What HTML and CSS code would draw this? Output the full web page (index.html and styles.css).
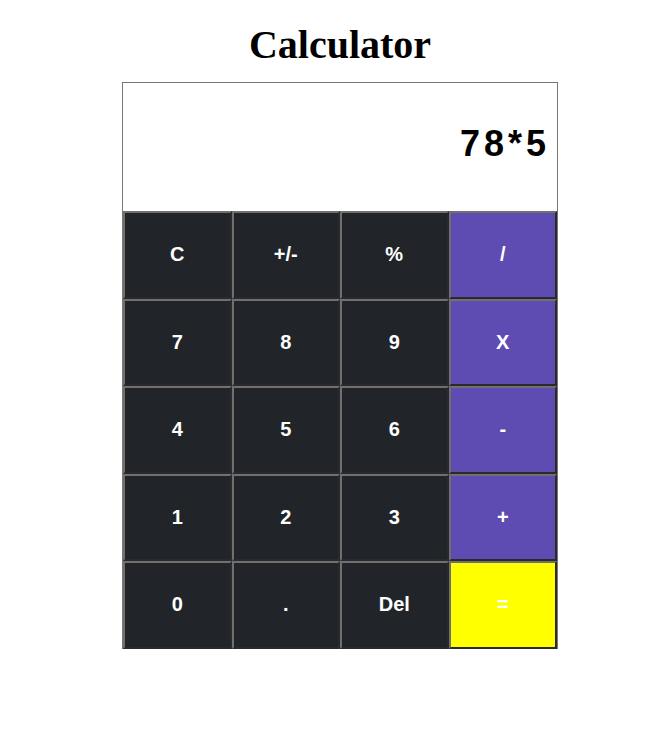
FILE: index.html
```html
<!DOCTYPE html>
<html>
<head>
<meta charset="utf-8">
<link rel="stylesheet" href="styles.css">
</head>
<body>
<div class="page">
  <h1 class="title">Calculator</h1>
  <div class="calc">
    <div class="display">78*5</div>
    <div class="keys">
      <button class="key">C</button>
      <button class="key">+/-</button>
      <button class="key">%</button>
      <button class="key op">/</button>
      <button class="key">7</button>
      <button class="key">8</button>
      <button class="key">9</button>
      <button class="key op">X</button>
      <button class="key">4</button>
      <button class="key">5</button>
      <button class="key">6</button>
      <button class="key op">-</button>
      <button class="key">1</button>
      <button class="key">2</button>
      <button class="key">3</button>
      <button class="key op">+</button>
      <button class="key">0</button>
      <button class="key">.</button>
      <button class="key">Del</button>
      <button class="key eq">=</button>
    </div>
  </div>
</div>
</body>
</html>
```
FILE: styles.css
```css
html, body {
  margin: 0;
  padding: 0;
  background: #ffffff;
}
.page {
  display: flex;
  flex-direction: column;
  align-items: center;
  padding-left: 17px;
}
.title {
  font-family: "Liberation Serif", "Times New Roman", serif;
  font-weight: bold;
  font-size: 40px;
  line-height: normal;
  margin: 21px 0 14px;
  color: #000;
}
.calc {
  width: 434px;
  border: 1px solid #777777;
  border-bottom: none;
}
.display {
  height: 128px;
  box-sizing: border-box;
  display: flex;
  align-items: center;
  justify-content: flex-end;
  padding-right: 7px;
  padding-bottom: 7px;
  font-family: "Liberation Sans", Arial, sans-serif;
  font-weight: bold;
  font-size: 36px;
  letter-spacing: 4px;
  color: #000;
  background: #fff;
}
.keys {
  display: grid;
  grid-template-columns: repeat(4, 1fr);
  grid-auto-rows: 87.5px;
}
.key {
  margin: 0;
  padding: 0;
  box-sizing: border-box;
  border-style: solid;
  border-width: 2px;
  border-color: #707070 #2a2a2a #2a2a2a #707070;
  background: #212529;
  color: #ffffff;
  font-family: "Liberation Sans", Arial, sans-serif;
  font-weight: bold;
  font-size: 20px;
}
.key.op {
  background: #5e4cb3;
}
.key.eq {
  background: #ffff00;
}
```
